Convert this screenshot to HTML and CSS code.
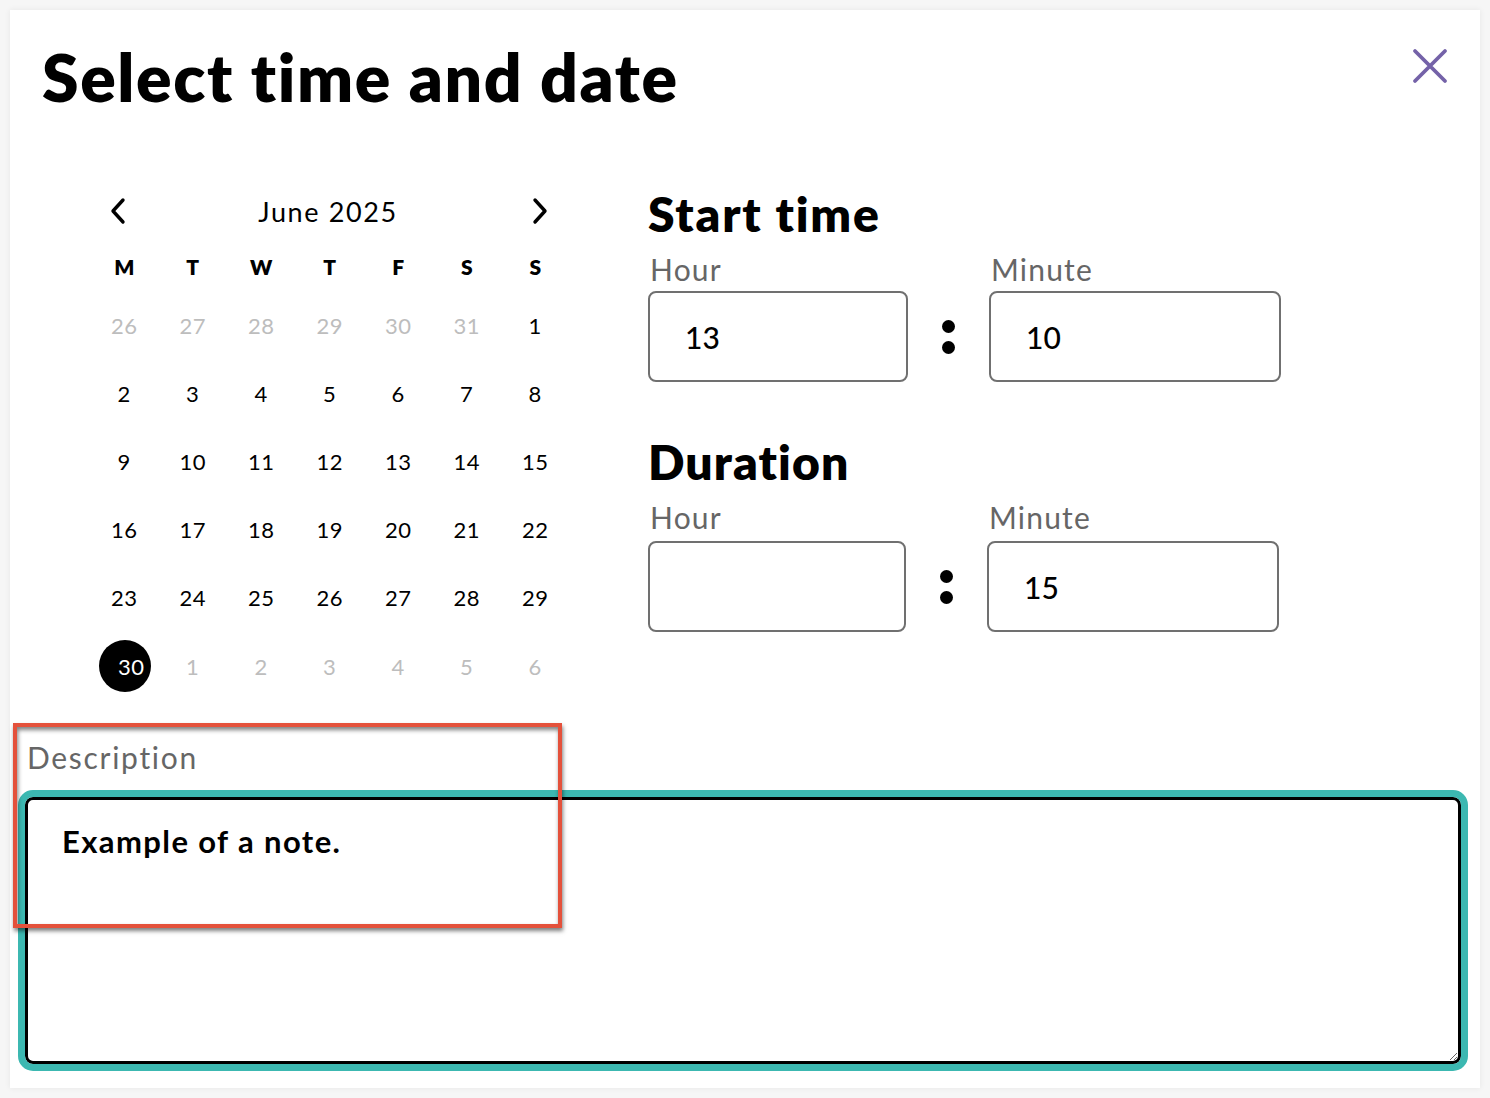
FILE: index.html
```html
<!DOCTYPE html>
<html lang="en">
<head>
<meta charset="utf-8">
<title>Select time and date</title>
<link rel="stylesheet" href="styles.css">
</head>
<body>
<div class="card">
  <header class="header">
    <h1 class="title">Select time and date</h1>
    <button class="close" aria-label="Close">
      <svg width="36" height="36" viewBox="0 0 36 36"><path d="M3 3 L33 33 M33 3 L3 33" stroke="#7462a8" stroke-width="3.8" stroke-linecap="round" fill="none"/></svg>
    </button>
  </header>

  <div class="main">
    <div class="calendar">
      <div class="cal-nav">
        <button class="nav-btn" aria-label="Previous month">
          <svg width="20" height="28" viewBox="0 0 20 28"><path d="M15 3 L5 14 L15 25" stroke="#000" stroke-width="3.4" fill="none" stroke-linecap="round" stroke-linejoin="round"/></svg>
        </button>
        <div class="month">June 2025</div>
        <button class="nav-btn" aria-label="Next month">
          <svg width="20" height="28" viewBox="0 0 20 28"><path d="M5 3 L15 14 L5 25" stroke="#000" stroke-width="3.4" fill="none" stroke-linecap="round" stroke-linejoin="round"/></svg>
        </button>
      </div>
      <div class="grid">
        <div class="wd">M</div><div class="wd">T</div><div class="wd">W</div><div class="wd">T</div><div class="wd">F</div><div class="wd">S</div><div class="wd">S</div>
        <div class="day muted">26</div><div class="day muted">27</div><div class="day muted">28</div><div class="day muted">29</div><div class="day muted">30</div><div class="day muted">31</div><div class="day">1</div>
        <div class="day">2</div><div class="day">3</div><div class="day">4</div><div class="day">5</div><div class="day">6</div><div class="day">7</div><div class="day">8</div>
        <div class="day">9</div><div class="day">10</div><div class="day">11</div><div class="day">12</div><div class="day">13</div><div class="day">14</div><div class="day">15</div>
        <div class="day">16</div><div class="day">17</div><div class="day">18</div><div class="day">19</div><div class="day">20</div><div class="day">21</div><div class="day">22</div>
        <div class="day">23</div><div class="day">24</div><div class="day">25</div><div class="day">26</div><div class="day">27</div><div class="day">28</div><div class="day">29</div>
        <div class="day"><span class="selected">30</span></div><div class="day muted">1</div><div class="day muted">2</div><div class="day muted">3</div><div class="day muted">4</div><div class="day muted">5</div><div class="day muted">6</div>
      </div>
    </div>

    <div class="times">
      <section class="time-block">
        <h2 class="block-title">Start time</h2>
        <div class="fields">
          <label class="field">
            <span class="field-label">Hour</span>
            <span class="box box-hour">13</span>
          </label>
          <div class="colon"><span class="dot"></span><span class="dot"></span></div>
          <label class="field">
            <span class="field-label">Minute</span>
            <span class="box box-min">10</span>
          </label>
        </div>
      </section>
      <section class="time-block second">
        <h2 class="block-title">Duration</h2>
        <div class="fields">
          <label class="field">
            <span class="field-label">Hour</span>
            <span class="box box-hour alt"></span>
          </label>
          <div class="colon"><span class="dot"></span><span class="dot"></span></div>
          <label class="field">
            <span class="field-label">Minute</span>
            <span class="box box-min">15</span>
          </label>
        </div>
      </section>
    </div>
  </div>

  <div class="desc">
    <div class="desc-label">Description</div>
    <textarea class="desc-input">Example of a note.</textarea>
    <div class="highlight"></div>
  </div>
</div>
</body>
</html>
```

FILE: styles.css
```css
* { box-sizing: border-box; }
html, body { margin: 0; padding: 0; }
body {
  background: #f6f6f6;
  font-family: "Lato", "Noto Sans", sans-serif;
  color: #000;
  width: 1490px;
  height: 1098px;
  overflow: hidden;
}
.card {
  position: relative;
  margin: 10px;
  width: 1470px;
  height: 1078px;
  background: #fff;
  box-shadow: 0 0 6px rgba(0,0,0,0.07);
}
.header {
  display: flex;
  justify-content: space-between;
  align-items: flex-start;
  padding: 27px 32px 0 32px;
}
.title {
  margin: 0;
  font-size: 66px;
  line-height: 80px;
  font-weight: 800;
  letter-spacing: 1.6px;
}
.close {
  border: 0;
  background: none;
  padding: 0;
  margin: 11px 0 0 0;
  width: 36px;
  height: 36px;
  cursor: pointer;
}
.close svg { display: block; }

.main {
  display: flex;
  margin-top: 69px;
}
.calendar {
  margin-left: 80px;
  width: 480px;
}
.cal-nav {
  display: flex;
  align-items: center;
  justify-content: space-between;
  height: 50px;
  padding: 0 20px 0 18px;
}
.nav-btn {
  border: 0;
  background: none;
  padding: 0;
  width: 20px;
  height: 28px;
}
.nav-btn svg { display: block; }
.month {
  font-size: 27px;
  font-weight: 400;
  letter-spacing: 1.6px;
  margin-left: -2px;
}
.grid {
  display: grid;
  grid-template-columns: repeat(7, 68.5px);
  grid-template-rows: 50px repeat(6, 68.2px);
  margin-top: 5px;
}
.wd {
  display: flex;
  align-items: center;
  justify-content: center;
  font-weight: 800;
  font-size: 21px;
}
.day {
  display: flex;
  align-items: center;
  justify-content: center;
  font-size: 22px;
  font-weight: 400;
  letter-spacing: 0.5px;
}
.day.muted { color: #bdbdbd; }
.selected {
  width: 52px;
  height: 52px;
  border-radius: 50%;
  background: #000;
  color: #fff;
  display: flex;
  align-items: center;
  justify-content: center;
  padding-left: 12px;
  margin-left: 2px;
}

.times {
  margin-left: 78px;
}
.time-block.second { margin-top: 52px; }
.block-title {
  margin: 0;
  font-size: 48px;
  line-height: 56px;
  font-weight: 800;
  letter-spacing: 1.8px;
}
.time-block.second .block-title { letter-spacing: 1.1px; }
.fields {
  display: flex;
  align-items: flex-end;
  margin-top: 10px;
}
.field {
  display: flex;
  flex-direction: column;
}
.field-label {
  font-size: 30px;
  line-height: 34px;
  color: #666;
  margin-left: 2px;
  margin-bottom: 5px;
  letter-spacing: 1.2px;
}
.time-block.second .field-label { margin-bottom: 7px; }
.box {
  display: flex;
  align-items: center;
  height: 91px;
  border: 2px solid #707070;
  border-radius: 8px;
  font-size: 30px;
  padding-left: 35px;
  font-weight: 500;
}
.box-hour { width: 260px; }
.box-hour.alt { width: 258px; }
.box-min { width: 292px; }
.colon {
  width: 81px;
  height: 91px;
  display: flex;
  flex-direction: column;
  align-items: center;
  justify-content: center;
  gap: 8px;
}
.dot {
  width: 13px;
  height: 13px;
  border-radius: 50%;
  background: #000;
}

.desc {
  position: absolute;
  left: 15px;
  top: 730px;
  width: 1436px;
}
.desc-label {
  font-size: 30px;
  line-height: 34px;
  color: #666;
  margin-left: 2px;
  letter-spacing: 1.7px;
}
.desc-input {
  display: block;
  margin-top: 23px;
  width: 1436px;
  height: 267px;
  border: 3px solid #000;
  border-radius: 8px;
  outline: 7px solid #3cb8b1;
  padding: 22px 34px;
  font-family: "Lato", "Noto Sans", sans-serif;
  font-size: 31px;
  font-weight: 700;
  letter-spacing: 1.4px;
  color: #000;
  resize: both;
}
.highlight {
  position: absolute;
  left: -12px;
  top: -17px;
  width: 549px;
  height: 205px;
  border: 4px solid #e4513b;
  box-shadow: 1px 3px 4px rgba(0,0,0,0.5), inset 1px 3px 4px rgba(0,0,0,0.5);
  pointer-events: none;
}
```
